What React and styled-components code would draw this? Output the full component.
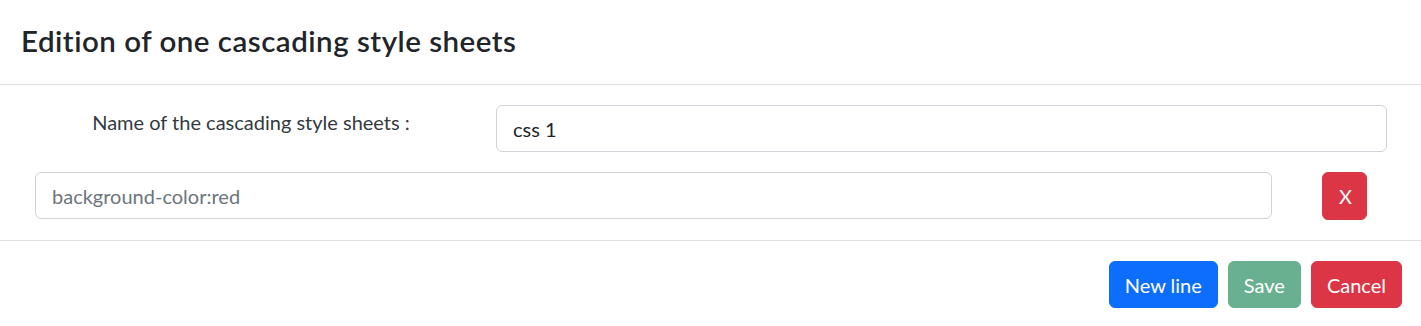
import React, { useState } from 'react'
import styled, { createGlobalStyle } from 'styled-components'

const GlobalStyle = createGlobalStyle`
  html, body {
    margin: 0;
    padding: 0;
    background: #ffffff;
  }
  body {
    font-family: 'Lato', 'Open Sans', 'Liberation Sans', sans-serif;
    color: #212529;
  }
  * {
    box-sizing: border-box;
  }
`

const colors = {
  text: '#212529',
  border: '#dee2e6',
  inputBorder: '#ced4da',
  placeholder: '#6c757d',
  primary: '#0d6efd',
  success: '#198754',
  danger: '#dc3545',
}

const Modal = styled.div`
  width: 100%;
  min-height: 326px;
  background: #fff;
  display: flex;
  flex-direction: column;
`

const Header = styled.header`
  height: 85px;
  padding: 0 21px;
  display: flex;
  align-items: center;
  border-bottom: 1px solid ${colors.border};
`

const Title = styled.h3`
  margin: 0 0 2px;
  font-size: 29.5px;
  font-weight: 600;
  letter-spacing: 0.5px;
  line-height: 1.2;
  color: ${colors.text};
`

const Body = styled.section`
  padding: 20px 34px 20px 35px;
  display: flex;
  flex-direction: column;
  gap: 20px;
  border-bottom: 1px solid ${colors.border};
`

const NameRow = styled.div`
  display: grid;
  grid-template-columns: 432px 1fr;
  column-gap: 29px;
`

const Label = styled.label`
  padding-top: 2px;
  font-size: 20px;
  font-weight: 400;
  line-height: 30px;
  text-align: center;
  color: #343a40;
`

const RuleRow = styled.div`
  display: grid;
  grid-template-columns: 1fr 45px;
  column-gap: 50px;
  margin-right: 20px;
`

const Input = styled.input`
  display: block;
  width: 100%;
  height: 47px;
  padding: 0 16px;
  font-family: inherit;
  font-size: 20px;
  color: ${colors.text};
  background: #fff;
  border: 1px solid ${colors.inputBorder};
  border-radius: 6px;
  outline: none;

  &::placeholder {
    color: ${colors.placeholder};
    opacity: 1;
  }
`

const Footer = styled.footer`
  padding: 20px 19px 18px;
  display: flex;
  justify-content: flex-end;
  gap: 10px;
`

const Button = styled.button`
  height: ${(p) => (p.$square ? '48px' : '47px')};
  padding: 0 ${(p) => (p.$square ? '16px' : '15px')};
  font-family: inherit;
  font-size: 20px;
  line-height: 1;
  color: #fff;
  background: ${(p) => p.$bg};
  border: 1px solid ${(p) => p.$bg};
  border-radius: 6px;
  opacity: ${(p) => (p.disabled ? 0.65 : 1)};
  cursor: ${(p) => (p.disabled ? 'default' : 'pointer')};
`

export default function App() {
  const [name, setName] = useState('css 1')
  const [rule, setRule] = useState('')

  return (
    <>
      <GlobalStyle />
      <Modal>
        <Header>
          <Title>Edition of one cascading style sheets</Title>
        </Header>
        <Body>
          <NameRow>
            <Label htmlFor="css-name">Name of the cascading style sheets :</Label>
            <Input id="css-name" value={name} onChange={(e) => setName(e.target.value)} />
          </NameRow>
          <RuleRow>
            <Input
              value={rule}
              placeholder="background-color:red"
              onChange={(e) => setRule(e.target.value)}
            />
            <Button $bg={colors.danger} $square>
              X
            </Button>
          </RuleRow>
        </Body>
        <Footer>
          <Button $bg={colors.primary}>New line</Button>
          <Button $bg={colors.success} disabled>
            Save
          </Button>
          <Button $bg={colors.danger}>Cancel</Button>
        </Footer>
      </Modal>
    </>
  )
}
